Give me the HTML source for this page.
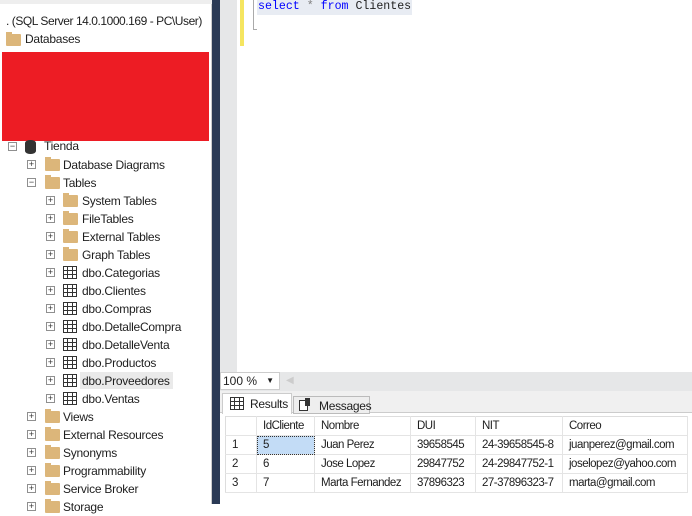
<!DOCTYPE html>
<html><head><style>
*{margin:0;padding:0;box-sizing:border-box}
body{width:692px;height:504px;overflow:hidden;background:#fff;font-family:"Liberation Sans",sans-serif;font-size:12px;color:#1e1e1e;position:relative}
.a{position:absolute}
.row{position:absolute;height:18px;line-height:18px;white-space:nowrap;letter-spacing:-0.25px}
.exp{position:absolute;width:9px;height:9px;border:1px solid #8f8f8f;background:#fff;font-size:9px;line-height:7px;text-align:center;color:#333}
.fold{position:absolute;width:15px;height:12px;background:#dcb67a;border-radius:1px}
.fold:before{content:"";position:absolute;left:0;top:-2px;width:6px;height:3px;background:#dcb67a}
.tbl{position:absolute;width:14px;height:13px;border:1px solid #333;background:
linear-gradient(#333,#333) 0 3px/100% 1px no-repeat,linear-gradient(#333,#333) 0 7px/100% 1px no-repeat,
linear-gradient(#333,#333) 3px 0/1px 100% no-repeat,linear-gradient(#333,#333) 8px 0/1px 100% no-repeat,#fff}
.g{table-layout:fixed;width:462px}
.g td{border-right:1px solid #e4e4e4;border-bottom:1px solid #e4e4e4;height:19px;padding-left:6px;font-size:11.5px;letter-spacing:-0.5px;white-space:nowrap;overflow:hidden}
</style></head><body>
<div class="a" style="left:0;top:0;width:212px;height:504px;background:#fff;border-right:1px solid #ccc"></div>
<div class="a" style="left:0;top:0;width:212px;height:4px;background:#eee"></div>
<div class="row" style="left:6px;top:12px;letter-spacing:-0.45px">. (SQL Server 14.0.1000.169 - PC\User)</div>
<div class="fold" style="left:6px;top:34px"></div><div class="row" style="left:25px;top:30px">Databases</div>
<div class="a" style="left:2px;top:52px;width:207px;height:89px;background:#ed1c24"></div>
<div class="exp" style="left:8px;top:142px">−</div>
<div class="a" style="left:25px;top:140px;width:11px;height:14px;background:#333;border-radius:5px/3px"></div>
<div class="row" style="left:44px;top:137px">Tienda</div>
<div id="t"></div>
<div class="a" style="left:212px;top:0;width:8px;height:504px;background:#2b3a55"></div>
<div class="a" style="left:220px;top:0;width:17px;height:372px;background:#e6e7e8"></div>
<div class="a" style="left:240px;top:0;width:4px;height:46px;background:#f5e560"></div>
<div class="a" style="left:253px;top:0;width:1px;height:29px;background:#aaa"></div>
<div class="a" style="left:253px;top:29px;width:4px;height:1px;background:#aaa"></div>
<div class="a" style="left:257px;top:0;width:155px;height:15px;background:#e8ecf3"></div>
<div class="a" style="left:258px;top:-1px;font-family:'Liberation Mono',monospace;font-size:11.6px;line-height:16px;white-space:pre"><span style="color:#0000ff">select</span> <span style="color:#808080">*</span> <span style="color:#0000ff">from</span> Clientes</div>
<div class="a" style="left:220px;top:372px;width:472px;height:19px;background:#e6e7e8"></div>
<div class="a" style="left:220px;top:372px;width:60px;height:18px;background:#fff;border:1px solid #ccc;line-height:16px;padding-left:2px">100 %<span style="position:absolute;right:5px;top:0;font-size:8px">▼</span></div>
<div class="a" style="left:286px;top:375px;color:#ccc;font-size:10px">◀</div>
<div class="a" style="left:220px;top:391px;width:472px;height:113px;background:#fff"></div>
<div class="a" style="left:220px;top:391px;width:472px;height:22px;background:#f0f0f0;border-bottom:1px solid #ccc"></div>
<div class="a" style="left:222px;top:393px;width:70px;height:21px;background:#fff;border:1px solid #ccc;border-bottom:none"></div>
<div class="tbl" style="left:230px;top:397px;"></div>
<div class="a" style="left:250px;top:397px;letter-spacing:-0.3px">Results</div>
<div class="a" style="left:293px;top:396px;width:77px;height:18px;background:#eee;border:1px solid #bbb"></div>
<div class="a" style="left:299px;top:400px;width:9px;height:11px;border:1px solid #333;background:#fff"></div>
<div class="a" style="left:305px;top:398px;width:5px;height:8px;background:#333"></div>
<div class="a" style="left:319px;top:399px;letter-spacing:-0.3px">Messages</div>
<table class="g a" style="left:225px;top:416px;border-collapse:collapse;border-top:1px solid #ddd;border-left:1px solid #ddd">
<colgroup><col style="width:31px"><col style="width:58px"><col style="width:96px"><col style="width:65px"><col style="width:87px"><col style="width:125px"></colgroup>
<tr style="background:#fff"><td></td><td>IdCliente</td><td>Nombre</td><td>DUI</td><td>NIT</td><td>Correo</td></tr>
<tr><td>1</td><td style="background:#c3dcf6;outline:1px dotted #333;outline-offset:-1px">5</td><td>Juan Perez</td><td>39658545</td><td>24-39658545-8</td><td>juanperez@gmail.com</td></tr>
<tr><td>2</td><td>6</td><td>Jose Lopez</td><td>29847752</td><td>24-29847752-1</td><td>joselopez@yahoo.com</td></tr>
<tr><td>3</td><td>7</td><td>Marta Fernandez</td><td>37896323</td><td>27-37896323-7</td><td>marta@gmail.com</td></tr>
</table>
<script>
var items=[[2,'f','Database Diagrams','+'],[2,'f','Tables','−'],[3,'f','System Tables','+'],[3,'f','FileTables','+'],[3,'f','External Tables','+'],[3,'f','Graph Tables','+'],[3,'t','dbo.Categorias','+'],[3,'t','dbo.Clientes','+'],[3,'t','dbo.Compras','+'],[3,'t','dbo.DetalleCompra','+'],[3,'t','dbo.DetalleVenta','+'],[3,'t','dbo.Productos','+'],[3,'t','dbo.Proveedores','+'],[3,'t','dbo.Ventas','+'],[2,'f','Views','+'],[2,'f','External Resources','+'],[2,'f','Synonyms','+'],[2,'f','Programmability','+'],[2,'f','Service Broker','+'],[2,'f','Storage','+']];
var h='';items.forEach(function(it,i){var y=155+i*18;var ex=it[0]==2?27:46;var ic=it[0]==2?45:63;var tx=it[0]==2?63:82;
h+='<div class="exp" style="left:'+ex+'px;top:'+(y+5)+'px">'+it[3]+'</div>';
h+=it[1]=='f'?'<div class="fold" style="left:'+ic+'px;top:'+(y+4)+'px"></div>':'<div class="tbl" style="left:'+ic+'px;top:'+(y+3)+'px"></div>';
if(it[2]=='dbo.Proveedores')h+='<div class="a" style="left:80px;top:'+(y+1)+'px;width:93px;height:17px;background:#eaeaea"></div>';
h+='<div class="row" style="left:'+tx+'px;top:'+(y+1)+'px">'+it[2]+'</div>';});
document.getElementById('t').innerHTML=h;
</script>
</body></html>
